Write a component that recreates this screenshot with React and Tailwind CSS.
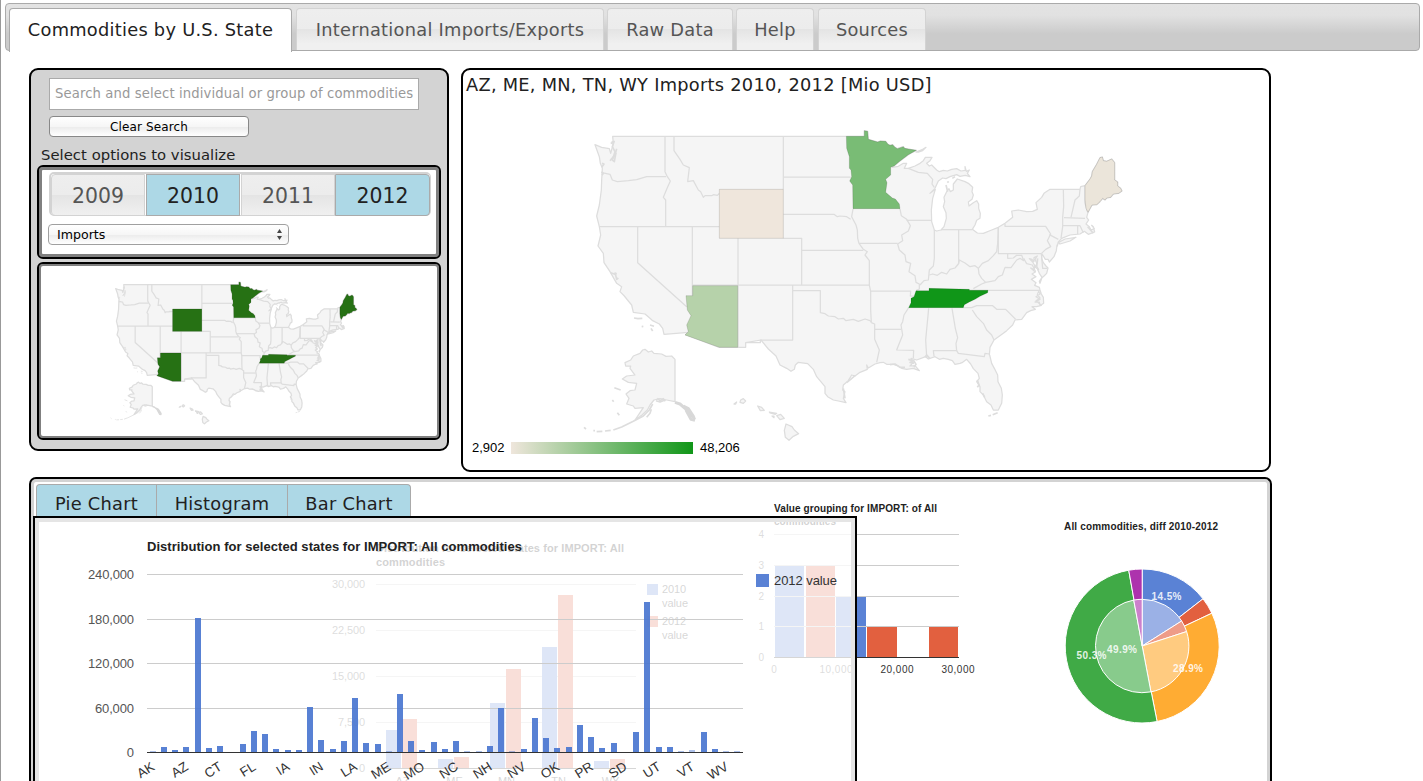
import React from "react";

const shift = (dx, dy, pts) =>
  pts.trim().split(/\s+/).map((p) => {
    const [x, y] = p.split(",").map(Number);
    return `${x + dx},${y + dy}`;
  }).join(" ");
const W = (p) => shift(0, 0, p);
const E = (p) => shift(780, 0, p);
const B = (p) => shift(0, 660, p);
const C = (p) => shift(1200, 240, p);

const mainland = [
  W("98,79 800,79"),
  E(`19,79 73,79 73,62 83,64 85,88 95,91 113,96 121,93 137,94 144,103 150,106 158,104 164,111 172,116 190,110 194,115 205,117 229,121
  215,128 205,134 180,153 157,172 175,169 190,160 200,160 193,175 205,175 225,168 240,160 250,152 256,142 276,142 270,152 260,160 268,168 275,165 290,180 298,185 310,181 322,183 335,178 350,176 363,183 376,181 375,170 379,184 388,180
  382,190 390,200 376,196 360,199 350,194 330,200 318,206 308,204 295,213 285,235 270,250 286,238 278,265 274,300 275,335 283,360 290,363 303,360 312,350 319,325 318,308
  310,290 314,275 312,262 320,245 327,236 331,245 340,240 340,222 352,207 375,215 385,220 398,232 396,245 400,255 396,268 385,276 387,288 400,278 410,272 416,282 416,295 421,310 420,325 410,331 405,345 397,358
  412,369 430,370 455,360 475,352 495,340 518,322 515,303 535,300 560,305 578,304 592,298 588,278 605,262 612,250 630,238 720,238 722,230 735,227 750,207 755,198 757,185 770,163 780,143 787,141 790,152 800,154 815,147 824,158
  824,210 833,216 833,228 842,235 846,243 836,250 820,252 812,262 800,264 795,270 788,265 780,275 770,284 756,285 744,307 740,322 746,330 738,342 748,350
  753,360 763,356 755,346 760,350 764,366 745,373 733,364 720,372 690,375 665,385 655,396 652,408`),
  C(`231,165 229,182 222,200 208,216 204,208 196,208 190,198 186,192 185,205 190,218 198,228 204,234 200,250 192,258 186,263 180,280 178,274 186,262 178,250
  172,236 166,232 170,220 165,208 172,198 162,203 162,215 156,208 148,206 158,216 164,226 163,238 152,234 166,246 156,252 168,260 154,268 168,278 164,286 178,292 180,300
  184,312 190,322 191,340 180,347 178,336 165,336 180,328 168,320 180,312 176,304 172,314 180,324 168,332 184,346 170,350 156,350 166,358 152,362`),
  E(`560,608 545,628 525,630 518,645 500,662 490,670 462,690 450,712 448,735`),
  B(`1229,75 1235,100 1243,115 1253,135 1254,155 1264,175 1267,195 1265,220 1255,240 1240,240 1233,225 1220,215 1210,195 1200,185 1200,170 1190,155
  1198,145 1194,130 1180,116 1172,102 1160,88 1148,97 1140,100 1125,103 1117,92 1105,88 1090,85 1078,88 1065,80 1045,87 1037,80 1010,90 993,85 1000,97 990,108 1005,107 1018,122 1000,115 980,118 965,115 955,108 940,103 920,103 910,97 900,98 885,102
  865,114 860,105 862,118 840,127 825,138 815,135 805,152 790,165 788,180 795,185 790,205 798,218 775,213 760,210 743,200 735,190 735,170 720,152 710,140 700,118 683,101 655,97 646,105 643,118 633,124 620,115 600,105
  588,78 565,57 543,30 497,38 497,52 418,52 317,14 325,7`),
  W(`252,673 248,655 238,642 218,632 210,625 195,612 160,607 155,585 145,573 133,558 120,545 125,530 110,520 90,485 72,458 70,430 54,408 62,375 58,350
  50,318 58,285 64,240 65,210 67,175 61,160 58,140 45,104 65,112 88,116 92,130 100,100 98,79`),
].join(" ");

const borders = [
  W("66,188 90,193 97,210 112,215 145,212 170,209 200,200 258,200"),
  W("255,79 255,185 262,200 271,213 260,238 250,262 257,270 257,350"),
  W("282,79 282,122 300,148 310,165 328,173 323,215 340,212 355,240 362,245 370,262 375,257 395,257 400,254 412,256 418,250"),
  W("58,350 418,350"),
  W("173,350 173,458 320,590"),
  W("337,350 337,557"),
  W("474,385 474,712"),
  W("610,79 610,238"),
  W("610,201 812,201"),
  W("610,313 762,313 772,320 780,318 800,320 812,328"),
  W("610,385 665,385 665,525"),
  W("665,421 850,421"),
  W("337,525 868,525"),
  W("638,525 638,690 541,690 541,698 497,698"),
  W("638,542 721,542 721,608 735,611 745,618 765,620 775,627 790,625 798,632 820,628 835,634 855,627 870,632 874,636"),
  E("39,297 35,320 48,345 52,360 53,385 57,400 70,418 82,425 75,435 88,452 88,525 92,545 92,600 94,638"),
  E("57,400 173,400"),
  E("200,331 274,331"),
  E("180,297 184,317 200,328 211,347 205,363 185,375 188,392 173,402 178,420 195,435 198,455 212,460 207,485 225,497 228,517 238,522 238,537 229,541"),
  E("283,360 283,445 280,468 268,480 265,510 252,512 240,525"),
  E("268,495 278,492 292,496 305,487 320,492 330,478 345,474 355,462 358,450 375,459 390,470 405,467 415,475 427,460 445,452 460,437 470,425 473,400 475,352"),
  E("356,360 356,462"),
  E("303,359 397,359"),
  E("475,352 475,431 604,431"),
  E("495,341 495,349 617,349 632,372 622,392 632,410 617,418 604,431"),
  E("628,374 655,388"),
  E("415,475 417,492 425,505 437,517 465,512 475,500 487,495 495,472 513,473 530,450 540,445 551,452 545,436 530,436 520,444 503,445 503,431"),
  E("437,517 425,522 400,536"),
  E("551,445 560,461 577,465 587,485"),
  E("388,541 600,541"),
  E("604,431 608,475 622,475"),
  E("670,238 671,290 668,322 668,350 663,385"),
  E("720,238 718,258 705,270 693,322"),
  E("672,323 735,325"),
  E("668,347 720,347 730,368"),
  E("713,347 713,373"),
  E("735,227 735,280 742,305"),
  E("92,543 212,543 211,558 222,558"),
  E("206,593 192,615 188,635 183,645 188,675 178,700 170,720 221,721 220,745"),
  E("105,658 183,658"),
  E("94,638 104,642 104,688 118,720 110,757"),
  E("266,595 257,690 260,740"),
  E("336,595 346,655 353,683 348,700 350,722 280,722 282,738"),
  E("350,722 355,730 433,740 435,730 448,732"),
  E("397,600 410,620 430,640 440,660 455,675 462,690"),
  E("370,593 395,593 410,587 458,587 470,598 497,598 527,628"),
  E("205,175 235,187 262,190 278,208 276,222 283,232"),
];

const chosen = {
  AZ: W("338,527 473,527 473,712 418,712 315,675 325,665 320,645 333,617 322,600 318,557 338,557"),
  WY: W("418,238 610,238 610,385 418,385"),
  MN: E("19,79 73,79 73,62 83,64 85,88 95,91 113,96 121,93 137,94 144,103 150,106 158,104 164,111 172,116 190,110 194,115 205,117 229,121 205,134 180,153 162,168 152,172 152,195 137,208 141,218 137,247 157,264 166,267 178,282 180,296 39,296 38,225 29,213 35,200 33,180 28,175 28,140 20,115"),
  TN: E("228,542 267,542 267,535 388,538 388,541 444,541 443,548 420,559 405,568 388,576 373,584 370,593 206,593 213,578 213,565 222,560"),
  ME: E("735,227 750,207 755,198 757,185 770,163 780,143 787,141 790,152 800,154 815,147 824,158 824,210 833,216 833,228 842,235 846,243 836,250 820,252 812,262 800,264 795,270 788,265 780,275 770,284 756,285 744,307 738,295 735,270"),
};

const alaska = B("195,58 205,66 215,63 222,70 245,72 258,79 275,78 285,88 285,215 260,210 240,206 222,210 210,225 202,240 186,255 165,270 180,248 190,233 165,235 160,228 140,222 147,205 138,192 150,182 165,180 170,160 145,157 127,147 140,138 165,135 150,115 152,108 137,108 135,98 152,90 160,78 180,70 188,60");
const islands = [
  B("482,210 490,206 497,213 490,220 480,217"),
  B("533,228 545,232 553,241 541,242"),
  B("568,246 590,250 586,253 570,249"),
  B("590,257 602,253 613,265 600,269"),
  B("618,282 636,290 643,300 656,311 640,319 627,331 616,322 613,301"),
  B("576,258 582,258 582,263"),
  B("462,222 470,216 467,222"),
  E("655,398 675,387 708,382 690,393 660,402"),
  E("228,126 248,118 258,112 248,122 237,126"),
];
const rough = [
  B("285,217 300,222 315,235 330,252 345,268"),
  B("310,228 325,236 342,262"),
  B("318,240 333,268 345,271"),
];
const chain = [
  B("218,222 208,240 190,258 160,274 125,291 100,300"),
  B("92,301 75,303"), B("67,304 50,305"), B("45,302 40,302"), B("12,292 18,297"),
  B("103,173 122,180"), B("97,210 101,215"), B("112,248 118,256"),
  B("228,212 240,216 255,210"), B("214,238 210,250 200,262"), B("232,205 240,212 250,206 256,214"),
  B("1225,258 1233,256"), B("1238,254 1253,248"),
  W("162,624 174,626 187,625"), W("210,645 222,649"), W("185,649 190,650"), W("213,655 218,663"),
  W("103,92 97,110 105,125 97,150 103,155 108,128"), W("90,152 100,140"), W("95,94 100,98 92,100"), W("110,116 104,138 94,148"), W("66,160 72,162 65,172"), W("64,186 70,190 66,196"),
  W("105,487 110,508 115,504"), W("92,488 105,493 110,490"),
  B("790,175 795,205"), B("800,158 812,148 825,137"), B("1000,90 1008,103 1002,112"), B("985,88 998,92 990,97 1002,100"), B("930,104 945,102 960,112 975,112"), B("1035,82 1040,75 1050,86"), B("1192,150 1197,165 1192,172"), B("1208,190 1214,202"),
  E("593,445 590,470 596,480"), E("743,350 760,370"), E("318,225 323,245"), E("322,218 326,214"), E("337,205 345,200"), E("765,282 770,272 780,272"), E("790,268 800,262"),
];

function UsMap({ className, viewBox, colors, label }) {
  return (
    <svg className={className} viewBox={viewBox} preserveAspectRatio="none" role="img" aria-label={label}>
      <g fill="#f5f5f5" stroke="#dddddd" strokeWidth="1.25" strokeLinejoin="round">
        <polygon points={mainland} vectorEffect="non-scaling-stroke" />
        <polygon points={alaska} vectorEffect="non-scaling-stroke" />
        {islands.map((p) => <polygon key={p} points={p} vectorEffect="non-scaling-stroke" />)}
      </g>
      <g fill="none" stroke="#dddddd" strokeLinejoin="round">
        {borders.map((p) => <polyline key={p} points={p} strokeWidth="1.25" vectorEffect="non-scaling-stroke" />)}
        {chain.map((p) => <polyline key={p} points={p} strokeWidth="5" />)}
        {rough.map((p) => <polyline key={p} points={p} strokeWidth="9" stroke="#d8d8d8" />)}
      </g>
      {Object.entries(chosen).map(([k, p]) => (
        <g key={k}>
          <polygon points={p} fill={colors[k]} />
          <polygon points={p} fill="none" stroke="#000" strokeOpacity="0.12" vectorEffect="non-scaling-stroke" />
        </g>
      ))}
    </svg>
  );
}

function T({ x, y, w, size = 10, children, fill = "#555", anchor, bold }) {
  return (
    <text x={x} y={y} fontSize={size} fill={fill} textAnchor={anchor} fontWeight={bold ? 700 : 400} textLength={w}>
      {children}
    </text>
  );
}

const BLUE = "#5a82d5";
const RED = "#e2603f";

function ComparisonChart() {
  const rows = [["AZ", 730, 719], ["ME", 759, 757], ["MN", 703, 669], ["TN", 647, 595], ["WY", 761, 759]];
  return (
    <g>
      <T x={376} y={552} w={248} size={11} bold fill="#222">Distribution for selected states for IMPORT: All</T>
      <T x={376} y={566} w={69} size={11} bold fill="#222">commodities</T>
      {["30,000", "22,500", "15,000", "7,500", "0"].map((t, i) => (
        <g key={t}>
          <rect x="376" y={584 + i * 46} width="260" height="1" fill={i === 4 ? "#333" : "#ccc"} />
          <T x={365} y={588 + i * 46} size={11} w={[33, 33, 33, 27, 6][i]} anchor="end">{t}</T>
        </g>
      ))}
      {rows.map(([t, a, b], i) => (
        <g key={t}>
          <rect x={386 + i * 52} y={a} width="15" height={768 - a} fill={BLUE} />
          <rect x={402 + i * 52} y={b} width="15" height={768 - b} fill={RED} />
          <T x={402.5 + i * 52} y={785} size={11} anchor="middle" fill="#333">{t}</T>
        </g>
      ))}
      <rect x="647" y="584" width="11" height="11" fill={BLUE} />
      <rect x="647" y="616" width="11" height="11" fill={RED} />
      <T x={662} y={593} w={24} size={11} fill="#333">2010</T>
      <T x={662} y={607} w={26} size={11} fill="#333">value</T>
      <T x={662} y={625} w={24} size={11} fill="#333">2012</T>
      <T x={662} y={639} w={26} size={11} fill="#333">value</T>
    </g>
  );
}

function GroupingChart() {
  const bars = [[775, 29, 566, BLUE], [806, 29, 566, RED], [836, 30, 597, BLUE], [867, 30, 627, RED], [929, 29, 627, RED]];
  return (
    <g>
      <T x={774} y={512} w={163} bold fill="#222">Value grouping for IMPORT: of All</T>
      <T x={774} y={525} w={62} bold fill="#222">commodities</T>
      {bars.map(([x, w, y, c]) => <rect key={x} x={x} y={y} width={w} height={657 - y} fill={c} />)}
      {[534, 565, 596, 626, 657].map((y, i) => (
        <g key={y}>
          <rect x="774" y={y} width="185" height="1" fill={i === 4 ? "#333" : "#ccc"} />
          <T x={764} y={y + 4} anchor="end">{4 - i}</T>
        </g>
      ))}
      <T x={774} y={673} anchor="middle">0</T>
      <T x={836} y={673} w={33} anchor="middle">10,000</T>
      <T x={897} y={673} w={33} anchor="middle" fill="#333">20,000</T>
      <T x={958} y={673} w={33} anchor="middle" fill="#333">30,000</T>
    </g>
  );
}

const slice = (r, a, b) => {
  const at = (f) => `${1142.2 + r * Math.sin(f * 2 * Math.PI)},${646 - r * Math.cos(f * 2 * Math.PI)}`;
  return `M1142.2,646 L${at(a)} A${r},${r} 0 ${b - a > 0.5 ? 1 : 0} 1 ${at(b)} Z`;
};

function DiffPie() {
  const outer = [[0, 0.145, "#5a82d5"], [0.145, 0.18, "#e2603f"], [0.18, 0.469, "#ffac33"], [0.469, 0.972, "#40aa46"], [0.972, 1, "#ad33ad"]];
  const inner = [[0, 0.16, "#9bb1e6"], [0.16, 0.2, "#ee9c88"], [0.2, 0.47, "#ffcb80"], [0.47, 0.971, "#88cb8c"], [0.971, 1, "#cc80cc"]];
  return (
    <g>
      <T x={1064} y={530} w={154} bold fill="#222">All commodities, diff 2010-2012</T>
      <g stroke="#fff" strokeWidth="1" strokeLinejoin="round">
        {outer.map(([a, b, c]) => <path key={a} d={slice(77, a, b)} fill={c} />)}
        {inner.map(([a, b, c]) => <path key={a} d={slice(46.7, a, b)} fill={c} />)}
      </g>
      <g opacity="0.85">
        <T x={1166.5} y={600} w={30} bold fill="#fff" anchor="middle">14.5%</T>
        <T x={1122} y={653} w={30} bold fill="#fff" anchor="middle">49.9%</T>
        <T x={1091.5} y={659} w={30} bold fill="#fff" anchor="middle">50.3%</T>
        <T x={1188} y={672} w={30} bold fill="#fff" anchor="middle">28.9%</T>
      </g>
    </g>
  );
}

const heights = [2, 16, 7, 16, 403, 13, 19, 0, 25, 64, 55, 10, 7, 7, 136, 37, 10, 34, 163, 28, 25, 3, 175, 34, 7, 31, 10, 34, 4, 2, 19, 133, 4, 10, 103, 43, 13, 16, 82, 46, 13, 28, 0, 61, 451, 16, 16, 2, 5, 61, 10, 4, 2];
const stateTicks = ["AK", "AZ", "CT", "FL", "IA", "IN", "LA", "ME", "MO", "NC", "NH", "NV", "OK", "PR", "SD", "UT", "VT", "WV"];

function StatesChart() {
  return (
    <svg className="block h-[263px] w-[820px] font-['Liberation_Sans',sans-serif]" viewBox="35 518 820 263">
      <T x={147} y={551} w={375} size={13} bold fill="#222">Distribution for selected states for IMPORT: All commodities</T>
      {["240,000", "180,000", "120,000", "60,000", "0"].map((t, i) => (
        <g key={t}>
          {i < 4 && <rect x="147" y={[574, 619, 663, 708][i]} width="596" height="1" fill="#ccc" />}
          <T x={134} y={[579, 624, 668, 713, 757][i]} w={[46, 46, 46, 39, 7][i]} size={13} anchor="end">{t}</T>
        </g>
      ))}
      {heights.map((h, i) => {
        const rows = h ? Math.max(1, Math.round(h / 3)) : 0;
        return (
          <rect key={i} x={Math.round(149.6 + 11.245 * i)} y={752 - rows} width="6" height={rows}
            fill="#4a76d0" fillOpacity={h < 6 ? 0.45 : 0.92} />
        );
      })}
      <rect x="147" y="752" width="596" height="1" fill="#333" />
      {stateTicks.map((t, i) => {
        const x = 155.5 + i * 33.75;
        return <text key={t} x={x} y="769" fontSize="13.3" fill="#333" textAnchor="end" transform={`rotate(-32 ${x} 769)`}>{t}</text>;
      })}
      <rect x="756" y="574" width="13" height="13" fill={BLUE} />
      <T x={774} y={585} w={63} size={13} fill="#333">2012 value</T>
    </svg>
  );
}

const idleTab = "h-[42px] rounded-t border border-b-0 border-[#d3d3d3] bg-[linear-gradient(#eeeeee_0%,#ececec_49%,#e4e4e4_50%,#f0f0f0_85%,#f0f0f0_100%)] text-[#555555]";

function TopTabs() {
  return (
    <nav className="ml-[5px] flex h-12 w-[1415px] shrink-0 rounded border border-[#aaaaaa] bg-[linear-gradient(#e3e3e3_0%,#e1e1e1_25%,#cbcbcb_65%,#cbcbcb_100%)] pl-[3px] pt-1 text-[17.8px] leading-[41px] tracking-[0.27px]">
      <a className="h-[44px] w-[283px] rounded-t border border-b-0 border-[#aaaaaa] bg-white text-center text-[#212121]">Commodities by U.S. State</a>
      <a className={`ml-[4px] w-[308px] text-center ${idleTab}`}>International Imports/Exports</a>
      <a className={`ml-[3px] w-[126px] text-center ${idleTab}`}>Raw Data</a>
      <a className={`ml-[3px] w-[78px] text-center ${idleTab}`}>Help</a>
      <a className={`ml-[4px] w-[108px] text-center ${idleTab}`}>Sources</a>
    </nav>
  );
}

function Years() {
  const on = "border-[#aaaaaa] bg-[#add8e6] text-[#212121]";
  const off = "border-[#d3d3d3] bg-[linear-gradient(#eeeeee_0%,#ececec_49%,#e4e4e4_50%,#f0f0f0_100%)] text-[#555555]";
  const base = "h-[42px] border text-center text-[20.4px] leading-[42px]";
  return (
    <div className="flex h-11 w-[382px] rounded-[5px] border border-l-2 border-t-2 border-[#d3d3d3]">
      <div className={`${base} w-[94px] rounded-l ${off}`}>2009</div>
      <div className={`${base} ml-px w-[94px] ${on}`}>2010</div>
      <div className={`${base} ml-px w-[94px] ${off}`}>2011</div>
      <div className={`${base} w-[95px] rounded-r ${on}`}>2012</div>
    </div>
  );
}

function Controls() {
  const box = "ml-1.5 w-[404px] rounded-[6px] border-2 border-black bg-white";
  return (
    <section className="h-[383px] w-[420px] rounded-[9px] border-2 border-black bg-[#d3d3d3]">
      <div className="ml-[18px] mt-2 flex h-8 w-[370px] items-center border border-[#aaaaaa] bg-white pl-[5px] text-[13.2px] tracking-[0.12px] text-[#999999]">
        <span className="whitespace-nowrap">Search and select individual or group of commodities</span>
      </div>
      <button className="ml-[18px] mt-1.5 block h-[21px] w-[200px] rounded border border-[#888888] bg-[linear-gradient(#ffffff_0%,#f6f6f6_50%,#ebebeb_51%,#ffffff_100%)] text-[12px] leading-[20px] tracking-[0.12px] text-black">Clear Search</button>
      <p className="ml-2.5 mt-1.5 h-[22px] text-[14.8px] leading-[24px] tracking-[0.04px] text-[#212121]">Select options to visualize</p>
      <div className={`${box} h-[94px] pl-2.5 pt-[5px] shadow-[inset_0_0_0_3px_#808080]`}>
        <Years />
        <div className="-ml-px mt-2 flex h-[21px] w-[241px] items-center justify-between rounded border border-[#a0a0a0] bg-[linear-gradient(#ffffff_0%,#f6f6f6_50%,#ebebeb_51%,#ffffff_100%)] pl-2 pr-[5px] text-[12.6px] text-black">
          <span className="pt-px">Imports</span>
          <svg className="h-[11px] w-[7px]" viewBox="0 0 7 11"><path d="M1 4 L3.5 0 L6 4Z M1 7 L3.5 11 L6 7Z" fill="#444" /></svg>
        </div>
      </div>
      <div className={`${box} mt-[3px] h-[178px] p-[3px] shadow-[inset_0_0_0_2px_#808080]`}>
        <UsMap className="block h-[168px] w-[394px]" viewBox="-438 -37 2583 1101" label="Selected states"
          colors={{ AZ: "#267114", WY: "#267114", MN: "#267114", TN: "#267114", ME: "#267114" }} />
      </div>
    </section>
  );
}

export default function App() {
  return (
    <main className="flex h-[781px] w-[1423px] flex-col overflow-hidden border-l border-[#999999] bg-white pt-[3px] font-['DejaVu_Sans',sans-serif]">
      <div className="-ml-px flex flex-col">
        <TopTabs />
        <div className="ml-[29px] mt-[17px] flex h-[409px] shrink-0 gap-3">
          <Controls />
          <section className="h-[404px] w-[810px] rounded-[9px] border-2 border-black bg-white">
            <h1 className="h-7 pl-[3px] text-[17.8px] leading-[29px] tracking-[0.27px] text-[#212121]">AZ, ME, MN, TN, WY Imports 2010, 2012 [Mio USD]</h1>
            <UsMap className="block h-[344px] w-[806px]" viewBox="-351 -36 2418 1032" label="Imports by state"
              colors={{ AZ: "#b6d2aa", WY: "#efe6dc", MN: "#79bc75", TN: "#109618", ME: "#ebe5da" }} />
            <div className="flex h-3 items-center pl-[9px] font-['Liberation_Sans',sans-serif] text-[13px] text-black">
              <span className="w-[39px]">2,902</span>
              <span className="h-3 w-[182px] bg-[linear-gradient(90deg,#efe6dc,#109618)]" />
              <span className="ml-[7px]">48,206</span>
            </div>
          </section>
        </div>
        <section className="relative ml-[29px] h-[340px] w-[1243px] shrink-0 rounded-t-[7px] border-2 border-b-0 border-black bg-white shadow-[inset_0_0_0_3px_#d3d3d3]">
          <div className="ml-[5px] mt-[5px] flex h-[34px] text-[17.8px] leading-[38px] tracking-[0.27px] text-[#212121]">
            <a className="w-[121px] rounded-tl border border-b-0 border-[#aaaaaa] bg-[#add8e6] text-center">Pie Chart</a>
            <a className="w-[131px] border border-b-0 border-l-0 border-[#aaaaaa] bg-[#add8e6] text-center">Histogram</a>
            <a className="w-[123px] rounded-tr border border-b-0 border-l-0 border-[#aaaaaa] bg-[#add8e6] text-center">Bar Chart</a>
          </div>
          <svg className="absolute left-0 top-0 h-[302px] w-[1239px] font-['Liberation_Sans',sans-serif]" viewBox="31 479 1239 302">
            <ComparisonChart />
            <GroupingChart />
            <DiffPie />
          </svg>
          <div className="absolute left-[2px] top-[37px] h-[290px] w-[824px] border-2 border-b-0 border-black bg-white/80 shadow-[inset_0_0_0_4px_#e5e5e5]">
            <StatesChart />
          </div>
        </section>
      </div>
    </main>
  );
}
